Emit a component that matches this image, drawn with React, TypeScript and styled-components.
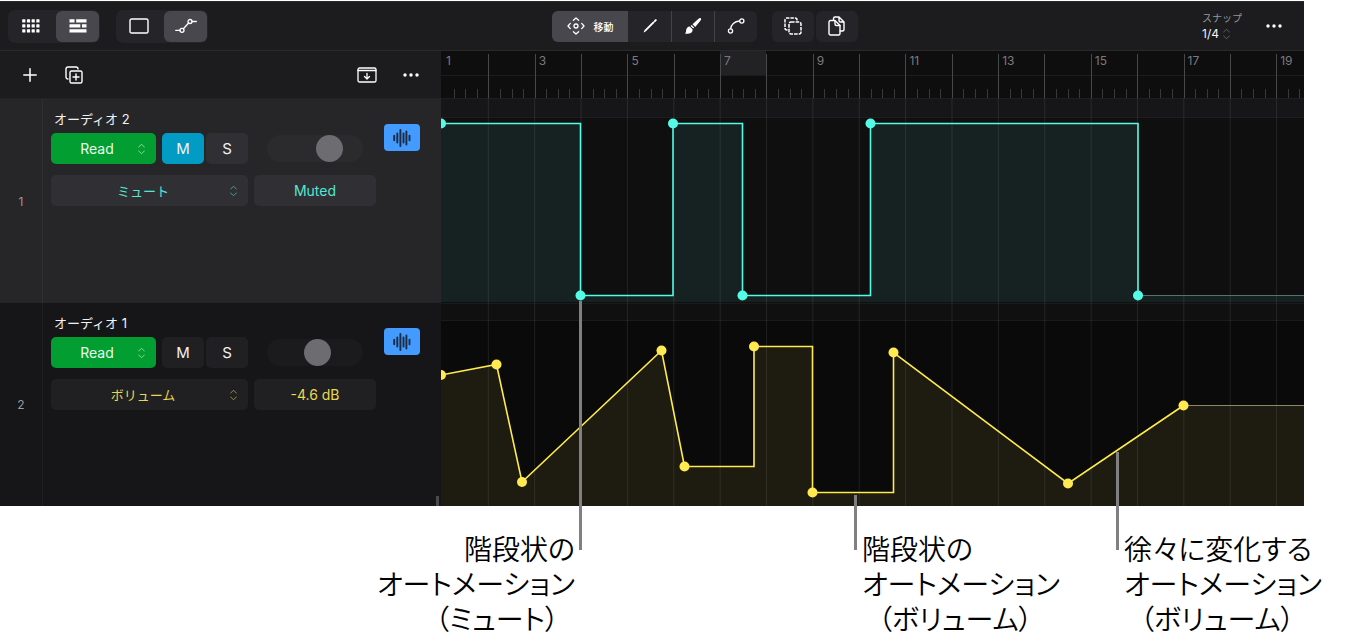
import React from "react";
import styled, { createGlobalStyle } from "styled-components";

const GlobalStyle = createGlobalStyle`
  *, *::before, *::after { box-sizing: border-box; }
  body {
    margin: 0;
    background: #fff;
    font-family: Inter, "Noto Sans CJK JP", "Liberation Sans", sans-serif;
  }
  button, select, input { font: inherit; margin: 0; }
`;

const Page = styled.main`
  padding-top: 1px;
  overflow-x: hidden;
`;

const AppWindow = styled.section`
  margin-right: 45px;
  background: #1c1c1e;
  color: #f2f2f4;
`;

/* ---------- top bar ---------- */

const TopBar = styled.header`
  display: flex;
  align-items: center;
  height: 50px;
  padding: 0 18px 0 8px;
  border-top: 1px solid #2a2c2c;
  border-bottom: 1px solid #29292b;
`;

const ViewGroup = styled.div`
  display: flex;
  gap: 4px;
  padding: 1px;
  margin-right: 16px;
  border-radius: 7px;
  background: #252529;
`;

const ToolButton = styled.button<{ $active?: boolean; $wide?: boolean }>`
  display: flex;
  align-items: center;
  justify-content: center;
  gap: 9px;
  width: ${(p) => (p.$wide ? 76 : 43)}px;
  height: 31px;
  padding: 0;
  border: 0;
  border-radius: 6px;
  background: ${(p) => (p.$active ? "#48474d" : "transparent")};
  color: #fff;
  font-size: 10px;
  font-weight: 500;
  white-space: nowrap;
`;

const Segments = styled.div`
  display: flex;
  margin: 0 15px 0 auto;
  border-radius: 6px;
  overflow: hidden;
  background: #252529;

  ${ToolButton} { border-radius: 0; }
  ${ToolButton} + ${ToolButton} + ${ToolButton} { border-left: 1px solid #444448; }
`;

const EditButtons = styled.div`
  display: flex;
  gap: 2px;
  margin-right: auto;

  ${ToolButton} { background: #252529; width: 42px; }
`;

const Snap = styled.label`
  display: flex;
  flex-direction: column;
  width: 48px;
  margin: 0 12px 0 16px;
  font-size: 10px;
  line-height: 16px;
  color: #97979b;
`;

const SnapValue = styled.span`
  display: flex;
  align-items: center;
  gap: 1px;
  color: #8c8c90;
`;

const SnapSelect = styled.select`
  appearance: none;
  width: 19px;
  padding: 0;
  border: 0;
  background: transparent;
  color: #f2f2f4;
  font-size: 12px;
  line-height: 16px;
`;

const IconButton = styled.button`
  display: flex;
  align-items: center;
  justify-content: center;
  width: 24px;
  height: 24px;
  padding: 0;
  border: 0;
  background: transparent;
  color: #fff;
`;

/* ---------- body ---------- */

const Body = styled.div`
  display: grid;
  grid-template-columns: 441px minmax(0, 1fr);
`;

const TrackPanel = styled.div`
  position: relative;

  &::after {
    content: "";
    position: absolute;
    right: 2px;
    bottom: 0;
    width: 3px;
    height: 10px;
    background: #4a4a4d;
  }
`;

const PanelBar = styled.div`
  display: flex;
  align-items: center;
  gap: 20px;
  height: 47px;
  padding: 0 18px;
`;

const Spacer = styled.span`
  flex: 1;
`;

const Track = styled.article<{ $selected?: boolean }>`
  display: grid;
  grid-template-columns: 43px 325px 36px;
  column-gap: 8px;
  height: ${(p) => (p.$selected ? 205 : 203)}px;
  border-top: ${(p) => (p.$selected ? "1px solid #222224" : "0")};
  background: ${(p) => (p.$selected ? "#262628" : "#161618")};
  --control: ${(p) => (p.$selected ? "#303034" : "#202023")};
  --groove: ${(p) => (p.$selected ? "#2b2b2e" : "#1b1b1d")};
  --rule: ${(p) => (p.$selected ? "#303033" : "#202022")};
`;

const TrackNumber = styled.span`
  display: flex;
  align-items: center;
  justify-content: center;
  border-right: 1px solid var(--rule);
  color: #9a9a9f;
  font-size: 12px;
`;

const Controls = styled.div`
  padding-top: 10px;
`;

const TrackName = styled.h2`
  margin: 0 0 4px 3px;
  font-size: 13px;
  font-weight: 400;
  line-height: 20px;
`;

const ControlRow = styled.div`
  display: flex;
  align-items: center;
  margin-bottom: 11px;
`;

const SelectBox = styled.span<{ $width: number; $bg: string; $ink: string }>`
  display: grid;
  grid-template-columns: 1fr 19px;
  align-items: center;
  width: ${(p) => p.$width}px;
  height: 31px;
  margin-right: 6px;
  border-radius: 5px;
  background: ${(p) => p.$bg};
  color: ${(p) => p.$ink};

  select {
    grid-area: 1 / 1 / 2 / 3;
    appearance: none;
    width: 100%;
    height: 31px;
    padding: 0 13px 0 0;
    border: 0;
    background: transparent;
    color: inherit;
    font-size: 14px;
    text-align: center;
    text-align-last: center;
  }

  svg { grid-area: 1 / 2; pointer-events: none; }
`;

const ParameterBox = styled(SelectBox)`
  select { font-size: 13px; }
`;

const Toggle = styled.button<{ $on?: boolean }>`
  width: 42px;
  height: 31px;
  margin-right: 2px;
  padding: 0;
  border: 0;
  border-radius: 5px;
  background: ${(p) => (p.$on ? "#019bc3" : "var(--control)")};
  color: #f2f2f4;
  font-size: 15px;
`;

const ValueButton = styled.button<{ $ink: string }>`
  width: 122px;
  height: 31px;
  padding: 0;
  border: 0;
  border-radius: 5px;
  background: var(--control);
  color: ${(p) => p.$ink};
  font-size: 14px;
`;

const PanSlider = styled.input`
  appearance: none;
  width: 96px;
  height: 27px;
  border-radius: 14px;
  background: var(--groove);

  ${ControlRow} > & { margin-left: 17px; }

  &::-webkit-slider-thumb {
    appearance: none;
    width: 27px;
    height: 27px;
    border-radius: 50%;
    background: #6d6c70;
  }
`;

const TrackBadge = styled.button`
  display: flex;
  align-items: center;
  justify-content: center;
  width: 36px;
  height: 27px;
  margin-top: 25px;
  padding: 0;
  border: 0;
  border-radius: 4px;
  background: #449bff;
  color: #1b2b40;

  ${Track} > & { margin-top: 25px; }
`;

/* ---------- timeline ---------- */

const Timeline = styled.div`
  position: relative;
  min-width: 0;
`;

const Ruler = styled.ol`
  display: grid;
  grid-template-columns: repeat(18, minmax(0, 5fr)) minmax(0, 3fr);
  height: 47px;
  margin: 0;
  padding: 0 0 0 1px;
  list-style: none;
  background:
    linear-gradient(#1c1c1d, #1c1c1d) 0 24px / 100% 1px no-repeat,
    #0e0e0e;
`;

const Bar = styled.li<{ $current?: boolean }>`
  display: flex;
  flex-direction: column;
  justify-content: space-between;
  background: ${(p) => (p.$current ? "linear-gradient(#222224, #222224) 0 0 / 100% 24px no-repeat" : "none")};
  color: #7b7b7f;
  font-size: 12px;
  line-height: 20px;

  > span {
    height: 20px;
    padding-left: 4px;
  }
`;

const Beats = styled.div<{ $first?: boolean; $partial?: boolean }>`
  display: grid;
  grid-template-columns: ${(p) => (p.$partial ? "5fr 5fr 2fr" : "repeat(4, 1fr)")};
  height: 44px;
  margin-top: -17px;

  i {
    height: 9px;
    margin-top: 35px;
    border-left: 1px solid #39393a;
  }

  i:first-child {
    height: 44px;
    margin-top: 0;
    border-left-color: ${(p) => (p.$first ? "transparent" : "#48484a")};
  }
`;

const LaneSvg = styled.svg`
  display: block;
  width: 100%;
`;

const Callout = styled.span<{ $top: number }>`
  position: absolute;
  top: ${(p) => p.$top}px;
  bottom: -44px;
  width: 3px;
  background: #808080;
`;

const Captions = styled.footer`
  display: grid;
  grid-template-columns: 441px 134fr 287fr 262fr 225fr;
  padding-top: 27px;
`;

const Caption = styled.p<{ $area: string; $end?: boolean }>`
  grid-area: ${(p) => p.$area};
  margin: 0;
  color: #000;
  font-family: "Liberation Sans", "Noto Sans CJK JP", sans-serif;
  font-size: 28px;
  font-weight: 350;
  line-height: 35px;
  font-feature-settings: "palt";
  text-align: ${(p) => (p.$end ? "right" : "left")};
  white-space: nowrap;

  span { display: block; }
  span:last-child { padding: 0 16px; }
`;

/* ---------- icons ---------- */

const stroke = { fill: "none", stroke: "currentColor", strokeLinecap: "round", strokeLinejoin: "round" } as const;

const GridIcon = () => (
  <svg width="18" height="14" viewBox="0 0 18 14" fill="currentColor" aria-hidden>
    {[0.3, 5.3, 10.3].map((y) =>
      [0.2, 4.9, 9.6, 14.3].map((x) => <rect key={`${x}-${y}`} x={x} y={y} width="3.2" height="3.2" rx="0.5" />)
    )}
  </svg>
);

const TracksIcon = () => (
  <svg width="18" height="14" viewBox="0 0 18 14" fill="currentColor" aria-hidden>
    <path d="M.5.3h5v3.200h-5zM7.200.3h10.300v3.200H7.200zM.5 5.300h10.800v3.200H.5zM13 5.300h4.500v3.200H13zM.5 10.300h17v3.200h-17z" />
  </svg>
);

const RegionIcon = () => (
  <svg width="20" height="16" viewBox="0 0 20 16" {...stroke} strokeWidth="1.4" aria-hidden>
    <rect x="1" y="1" width="18" height="14" rx="1.6" />
  </svg>
);

const AutomationIcon = () => (
  <svg width="22" height="16" viewBox="0 0 22 16" {...stroke} strokeWidth="1.3" aria-hidden>
    <circle cx="7" cy="12.3" r="2" />
    <circle cx="15" cy="3.5" r="2" />
    <path d="M.7 12.300h4.300M17 3.500h4.300M8.400 10.800l5.200-5.800" />
  </svg>
);

const MoveIcon = () => (
  <svg width="18" height="18" viewBox="0 0 18 18" {...stroke} strokeWidth="1.3" aria-hidden>
    <circle cx="9" cy="9" r="2" />
    <path d="M6.400 3.300L9 1l2.600 2.300M6.400 14.700L9 17l2.600-2.300M3.300 6.400L1 9l2.300 2.600M14.700 6.400L17 9l-2.300 2.600" />
  </svg>
);

const PencilIcon = () => (
  <svg width="16" height="16" viewBox="0 0 16 16" aria-hidden>
    <path d="M3 12.900L12 3.900" stroke="currentColor" strokeWidth="2" />
    <path d="M12.800 3.100l1-1" stroke="currentColor" strokeWidth="2" strokeLinecap="round" />
    <path d="M2.300 12.200l1.400 1.400-2 .8z" fill="currentColor" />
  </svg>
);

const BrushIcon = () => (
  <svg width="18" height="18" viewBox="0 0 18 18" fill="currentColor" aria-hidden>
    <path d="M16.800 1.200c.7.700.2 1.700-.4 2.500l-5.200 6.200-2.700-2.700 6-5.400c.8-.7 1.700-1.200 2.300-.6z" />
    <path d="M7.600 8l2.500 2.500-.9 1.100-2.700-2.700z" />
    <path d="M5.700 9.500l2.800 2.800c.3 1.300-.2 2.800-1.700 3.700-1.700 1-4.300 1-6 .2 1.300-.5 1.200-1.400 1.300-2.700.1-2.200 1.600-3.900 3.600-4z" />
  </svg>
);

const CurveIcon = () => (
  <svg width="18" height="16" viewBox="0 0 18 16" {...stroke} strokeWidth="1.3" aria-hidden>
    <circle cx="3.500" cy="13" r="2.1" />
    <circle cx="14.800" cy="3" r="2.1" />
    <path d="M3.700 10.600C4 6.600 7.500 3.300 12.400 3" />
  </svg>
);

const SelectionIcon = () => (
  <svg width="18" height="18" viewBox="0 0 18 18" {...stroke} strokeWidth="1.5" strokeLinecap="butt" aria-hidden>
    <path d="M3.500 13H3a2 2 0 0 1-2-2V3a2 2 0 0 1 2-2h8a2 2 0 0 1 2 2v.5" strokeDasharray="3.4 1" />
    <rect x="5" y="5" width="12" height="12" rx="2" strokeDasharray="3.6 1" />
  </svg>
);

const CopyIcon = () => (
  <svg width="18" height="20" viewBox="0 0 18 20" {...stroke} strokeWidth="1.4" aria-hidden>
    <path d="M1 6a1.500 1.500 0 0 1 1.500-1.500H7l5 5V17.500A1.500 1.500 0 0 1 10.500 19h-8A1.500 1.500 0 0 1 1 17.500z" />
    <path d="M7 4.700V8a1.500 1.500 0 0 0 1.500 1.500H12M5.500 4.200V2.500A1.500 1.500 0 0 1 7 1h4l5 5v7.500a1.500 1.500 0 0 1-1.500 1.500H12.300M11 1v3.500A1.500 1.500 0 0 0 12.500 6H16" />
  </svg>
);

const MoreIcon = () => (
  <svg width="16" height="4" viewBox="0 0 16 4" fill="currentColor" aria-hidden>
    <circle cx="2" cy="2" r="1.7" />
    <circle cx="8" cy="2" r="1.7" />
    <circle cx="14" cy="2" r="1.7" />
  </svg>
);

const PlusIcon = () => (
  <svg width="14" height="14" viewBox="0 0 14 14" {...stroke} strokeWidth="1.5" aria-hidden>
    <path d="M7 .8v12.400M.8 7h12.400" />
  </svg>
);

const DuplicateIcon = () => (
  <svg width="18" height="18" viewBox="0 0 18 18" {...stroke} strokeWidth="1.4" aria-hidden>
    <path d="M3 13A2 2 0 0 1 1 11V3A2 2 0 0 1 3 1h8A2 2 0 0 1 13 3" />
    <rect x="5" y="5" width="12" height="12" rx="1.6" />
    <path d="M11 8v6M8 11h6" />
  </svg>
);

const ImportIcon = () => (
  <svg width="20" height="16" viewBox="0 0 20 16" {...stroke} strokeWidth="1.3" aria-hidden>
    <rect x="1" y="1" width="18" height="14" rx="1.6" />
    <path d="M1 3.500h18M10 6.300v5.500M7.500 9.500l2.500 2.500 2.500-2.500" />
  </svg>
);

const Chevrons = () => (
  <svg width="9" height="12" viewBox="0 0 9 12" {...stroke} strokeWidth="1" opacity="0.6" aria-hidden>
    <path d="M1.500 4.200l3-3 3 3M1.500 7.800l3 3 3-3" />
  </svg>
);

const WaveIcon = () => (
  <svg width="18" height="18" viewBox="0 0 18 18" {...stroke} strokeWidth="1.9" aria-hidden>
    <path d="M1.200 6.800v4.400M4.300 4.500v9M7.400 1v16M10.500 4.500v9M13.400 2.500v13M16.500 6.800v4.400" />
  </svg>
);

/* ---------- automation data ---------- */

type Point = [number, number];

const WIDTH = 863;
const gridLines = Array.from({ length: 18 }, (_, i) => 47.3 + i * 46.37);

interface LaneProps {
  height: number;
  header: number;
  headerFill: string;
  bodyFill: string;
  rule: string;
  ink: string;
  tail: string;
  area: string;
  line: Point[];
  nodes: Point[];
  floor: number;
  label: string;
}

function Lane(p: LaneProps) {
  const last = p.line[p.line.length - 1];
  const path = "M" + p.line.map(([x, y]) => `${x} ${y}`).join("L");
  return (
    <LaneSvg height={p.height} viewBox={`0 0 ${WIDTH} ${p.height}`} preserveAspectRatio="none" role="img" aria-label={p.label}>
      <rect width={WIDTH} height={p.height} fill={p.bodyFill} />
      <rect width={WIDTH} height={p.header} fill={p.headerFill} />
      <path d={`${path}H${WIDTH}V${p.floor}H0Z`} fill={p.area} />
      <path d={`M0 ${p.header + 0.5}H${WIDTH}M0 .5H${WIDTH}`} stroke={p.rule} fill="none" />
      {gridLines.map((x) => (
        <path key={x} d={`M${x} 0V${p.height}`} stroke="#fff" strokeOpacity="0.09" vectorEffect="non-scaling-stroke" />
      ))}
      <path d={`M${last[0]} ${last[1]}H${WIDTH}`} stroke={p.tail} vectorEffect="non-scaling-stroke" />
      <path d={path} fill="none" stroke={p.ink} strokeWidth="1.6" vectorEffect="non-scaling-stroke" />
      {p.nodes.map(([x, y]) => (
        <path key={x} d={`M${x} ${y}h.01`} stroke={p.ink} strokeWidth="10" strokeLinecap="round" vectorEffect="non-scaling-stroke" />
      ))}
    </LaneSvg>
  );
}

const muteLine: Point[] = [
  [0, 25.5], [139.5, 25.5], [139.5, 197.5], [232, 197.5], [232, 25.5], [301.5, 25.5],
  [301.5, 197.5], [429.5, 197.5], [429.5, 25.5], [697, 25.5], [697, 197.5],
];
const muteNodes: Point[] = [[0, 25.5], [139.5, 197.5], [232, 25.5], [301.5, 197.5], [429.5, 25.5], [697, 197.5]];

const volumeLine: Point[] = [
  [0, 72], [55.5, 61.5], [81, 179], [220.5, 47.5], [243.5, 163.5], [313, 163.5], [313, 43.5],
  [371.5, 43.5], [371.5, 189.5], [452.5, 189.5], [452.5, 49.5], [627, 180.5], [742.5, 102.5],
];
/* the corners of a step carry no handle */
const volumeNodes: Point[] = volumeLine.filter((_, i) => ![5, 7, 9].includes(i));

interface TrackData {
  no: number;
  name: string;
  muted: boolean;
  pan: number;
  parameter: string;
  value: string;
  ink: string;
}

const tracks: TrackData[] = [
  { no: 1, name: "オーディオ 2", muted: true, pan: 71, parameter: "ミュート", value: "Muted", ink: "#55e6d2" },
  { no: 2, name: "オーディオ 1", muted: false, pan: 54, parameter: "ボリューム", value: "-4.6 dB", ink: "#e8d850" },
];

function TrackHeader({ t }: { t: TrackData }) {
  return (
    <Track $selected={t.muted}>
      <TrackNumber>{t.no}</TrackNumber>
      <Controls>
        <TrackName>{t.name}</TrackName>
        <ControlRow>
          <SelectBox $width={105} $bg="#029e31" $ink="#eafbea">
            <select aria-label="オートメーションモード" defaultValue="Read">
              <option>Read</option>
            </select>
            <Chevrons />
          </SelectBox>
          <Toggle $on={t.muted} aria-pressed={t.muted}>M</Toggle>
          <Toggle aria-pressed={false}>S</Toggle>
          <PanSlider type="range" min={0} max={100} defaultValue={t.pan} aria-label="パン" />
        </ControlRow>
        <ControlRow>
          <ParameterBox $width={197} $bg="var(--control)" $ink={t.ink}>
            <select aria-label="パラメータ" defaultValue={t.parameter}>
              <option>{t.parameter}</option>
            </select>
            <Chevrons />
          </ParameterBox>
          <ValueButton $ink={t.ink}>{t.value}</ValueButton>
        </ControlRow>
      </Controls>
      <TrackBadge aria-label="オーディオ">
        <WaveIcon />
      </TrackBadge>
    </Track>
  );
}

export default function App() {
  return (
    <Page>
      <GlobalStyle />
      <AppWindow>
        <TopBar>
          <ViewGroup>
            <ToolButton aria-label="グリッド"><GridIcon /></ToolButton>
            <ToolButton aria-label="トラック" $active><TracksIcon /></ToolButton>
          </ViewGroup>
          <ViewGroup>
            <ToolButton aria-label="リージョン"><RegionIcon /></ToolButton>
            <ToolButton aria-label="オートメーション" $active><AutomationIcon /></ToolButton>
          </ViewGroup>
          <Segments>
            <ToolButton $active $wide><MoveIcon />移動</ToolButton>
            <ToolButton aria-label="鉛筆"><PencilIcon /></ToolButton>
            <ToolButton aria-label="ブラシ"><BrushIcon /></ToolButton>
            <ToolButton aria-label="カーブ"><CurveIcon /></ToolButton>
          </Segments>
          <EditButtons>
            <ToolButton aria-label="選択"><SelectionIcon /></ToolButton>
            <ToolButton aria-label="コピー"><CopyIcon /></ToolButton>
          </EditButtons>
          <Snap>
            スナップ
            <SnapValue>
              <SnapSelect defaultValue="1/4">
                <option>1/4</option>
              </SnapSelect>
              <Chevrons />
            </SnapValue>
          </Snap>
          <IconButton aria-label="その他"><MoreIcon /></IconButton>
        </TopBar>
        <Body>
          <TrackPanel>
            <PanelBar>
              <IconButton aria-label="追加"><PlusIcon /></IconButton>
              <IconButton aria-label="複製"><DuplicateIcon /></IconButton>
              <Spacer />
              <IconButton aria-label="読み込む"><ImportIcon /></IconButton>
              <IconButton aria-label="その他"><MoreIcon /></IconButton>
            </PanelBar>
            {tracks.map((t) => <TrackHeader key={t.no} t={t} />)}
          </TrackPanel>
          <Timeline>
            <Ruler>
              {Array.from({ length: 19 }, (_, i) => i + 1).map((n) => (
                <Bar key={n} $current={n === 7}>
                  <span>{n % 2 ? n : ""}</span>
                  <Beats $first={n === 1} $partial={n === 19}>
                    <i /><i /><i />{n < 19 && <i />}
                  </Beats>
                </Bar>
              ))}
            </Ruler>
            <Lane
              label="ミュートのオートメーション" height={205} header={19} headerFill="#161618" bodyFill="#0f0f0f"
              rule="#1e1e20" ink="#55fbe6" tail="#5c6f6d" area="#152221" line={muteLine} nodes={muteNodes} floor={204}
            />
            <Lane
              label="ボリュームのオートメーション" height={203} header={17} headerFill="#101010" bodyFill="#0a0a0a"
              rule="#1b1b1b" ink="#ffeb50" tail="#8d8868" area="#1e1b11" line={volumeLine} nodes={volumeNodes} floor={203}
            />
            <Callout $top={250} style={{ left: `${(138 / WIDTH) * 100}%` }} />
            <Callout $top={444} style={{ left: `${(413 / WIDTH) * 100}%` }} />
            <Callout $top={401} style={{ left: `${(675 / WIDTH) * 100}%` }} />
          </Timeline>
        </Body>
      </AppWindow>
      <Captions>
        <Caption $area="1 / 1 / 2 / 3" $end>
          <span>階段状の</span><span>オートメーション</span><span>（ミュート）</span>
        </Caption>
        <Caption $area="1 / 4">
          <span>階段状の</span><span>オートメーション</span><span>（ボリューム）</span>
        </Caption>
        <Caption $area="1 / 5">
          <span>徐々に変化する</span><span>オートメーション</span><span>（ボリューム）</span>
        </Caption>
      </Captions>
    </Page>
  );
}
